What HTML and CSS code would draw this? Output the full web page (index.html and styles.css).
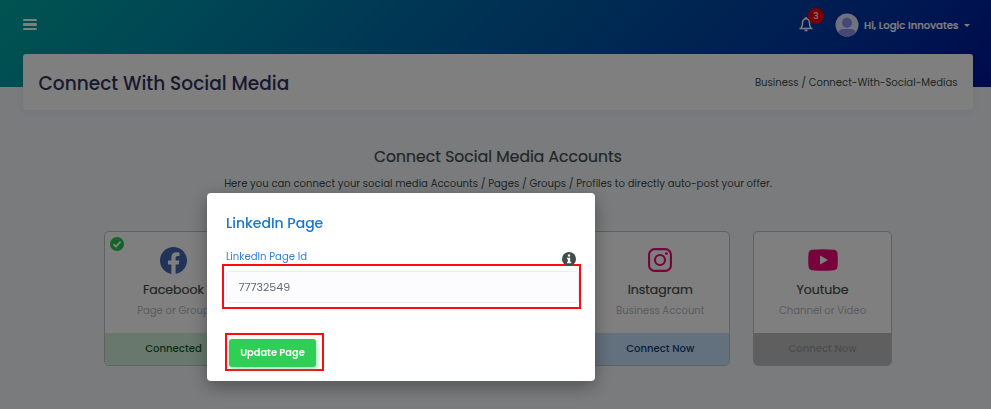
FILE: index.html
```html
<!DOCTYPE html>
<html lang="en">
<head>
<meta charset="utf-8">
<title>Connect With Social Media</title>
<link rel="stylesheet" href="styles.css">
</head>
<body>
<div class="page">
  <header class="hero">
    <nav class="topbar">
      <div class="burger"><i></i><i></i><i></i></div>
      <div class="user-area">
        <div class="bell">
          <svg width="14" height="16" viewBox="0 0 14 16" fill="none" stroke="currentColor" stroke-width="1.5"><path d="M.5 12.400h13M2 12.200c1.200-1.200 1.500-2.300 1.500-5.200C3.500 4.300 5 2.800 7 2.800s3.500 1.500 3.500 4.200c0 2.900.3 4 1.500 5.200"/><path d="M7 1v2M5.600 14.300h2.800" stroke-width="1.700"/></svg>
          <span class="badge">3</span>
        </div>
        <svg class="avatar" viewBox="0 0 24 24"><defs><clipPath id="round"><circle cx="12" cy="12" r="11.500"/></clipPath></defs><circle cx="12" cy="12" r="11.500" fill="#e0e4ff"/><g clip-path="url(#round)" fill="#8f8fee"><circle cx="12" cy="9.700" r="5"/><path d="M3.500 24v-4q0-4 5-4h7q5 0 5 4v4z"/></g></svg>
        <span class="hello">Hi, Logic Innovates</span>
        <span class="caret"></span>
      </div>
    </nav>
  </header>
  <section class="titlebar">
    <h1>Connect With Social Media</h1>
    <div class="crumbs">Business / Connect-With-Social-Medias</div>
  </section>
  <main>
    <h2>Connect Social Media Accounts</h2>
    <p class="intro">Here you can connect your social media Accounts / Pages / Groups / Profiles to directly auto-post your offer.</p>
    <div class="cards">
      <article class="card facebook">
        <svg class="check" viewBox="0 0 14 14"><circle cx="7" cy="7" r="7" fill="#28c74f"/><path d="M3.500 7.300l2.400 2.300 4.700-4.900" fill="none" stroke="#fff" stroke-width="1.900"/></svg>
        <div class="logo"><svg width="27" height="27" viewBox="0 0 24 24" fill="#4267b2"><path d="M24 12.070C24 5.400 18.630 0 12 0S0 5.400 0 12.070C0 18.100 4.390 23.090 10.130 24v-8.440H7.080v-3.490h3.050V9.410c0-3.020 1.790-4.690 4.530-4.690 1.310 0 2.680.24 2.680.24v2.970h-1.510c-1.490 0-1.960.93-1.960 1.890v2.250h3.330l-.53 3.490h-2.800V24C19.610 23.090 24 18.100 24 12.070z"/></svg></div>
        <h3>Facebook</h3><p>Page or Group</p><footer>Connected</footer>
      </article>
      <article class="card instagram">
        <div class="logo"><svg width="24" height="24" viewBox="0 0 24 24" fill="none" stroke="#ec0678" stroke-width="2.100"><rect x="1.100" y="1.100" width="21.800" height="21.800" rx="5.500"/><circle cx="12" cy="12" r="5"/><circle cx="18.400" cy="5.600" r="1.400" fill="#ec0678" stroke="none"/></svg></div>
        <h3>Instagram</h3><p>Business Account</p><footer>Connect Now</footer>
      </article>
      <article class="card youtube">
        <div class="logo"><svg width="30" height="22" viewBox="0 0 30 22"><path d="M4 .8Q15-.5 26 .8q3 .4 3.400 3.200.8 7 0 14-.4 2.800-3.400 3.200-11 1.300-22 0-3-.4-3.400-3.200-.8-7 0-14Q1 1.200 4 .8z" fill="#ec0678"/><path d="M12 6.400v9l8-4.500z" fill="#fff"/></svg></div>
        <h3>Youtube</h3><p>Channel or Video</p><footer>Connect Now</footer>
      </article>
    </div>
  </main>
</div>
<div class="backdrop">
  <div class="modal">
    <h4>LinkedIn Page</h4>
    <div class="label-row">
      <label for="page-id">LinkedIn Page Id</label>
      <svg class="info" viewBox="0 0 14 14"><circle cx="7" cy="7" r="7" fill="#404d49"/><path d="M5.900 2.500h2.300v2H5.900zM5 5.700h3.200v4h1v1.500H5V9.700h.9V7.200H5z" fill="#fff"/></svg>
    </div>
    <div class="mark mark-input"><input id="page-id" type="text" value="77732549"></div>
    <div class="mark mark-button"><button type="button">Update Page</button></div>
  </div>
</div>
</body>
</html>
```

FILE: styles.css
```css
* { box-sizing: border-box; }
body { margin: 0; width: 991px; height: 409px; overflow: hidden; font-family: Poppins, Inter, sans-serif; color: #404d49; }
h1, h2, h3, h4, p { margin: 0; white-space: nowrap; }
svg { display: block; }
.page { height: 409px; background: #f4f6fb; }
.hero { height: 87px; background: linear-gradient(135deg, #00a8a0 0%, #008eaa 19%, #0070a8 38%, #004ea4 62%, #0030a4 85%, #001498 100%); }
.topbar { display: flex; justify-content: space-between; align-items: center; height: 50px; padding: 0 21px 0 23px; color: #fff; }
.burger { display: flex; flex-direction: column; gap: 2.500px; width: 14px; margin-top: -1px; }
.burger i { height: 2.200px; background: #fff; border-radius: 1px; }
.user-area { display: flex; align-items: center; }
.bell { position: relative; margin-right: 22px; top: -1px; }
.badge { position: absolute; left: 9px; top: -8px; width: 16px; height: 16px; border-radius: 50%; background: #f00000; font-size: 9px; font-weight: 500; line-height: 16px; text-align: center; }
.avatar { width: 24px; height: 24px; margin-right: 5px; }
.hello { position: relative; top: .5px; font-size: 10.100px; font-weight: 500; width: 94px; letter-spacing: .02px; white-space: nowrap; -webkit-text-stroke: .2px; }
.caret { border: 3px solid transparent; border-top-color: #fff; border-bottom: 0; margin-left: 6px; }
.titlebar { display: flex; align-items: center; justify-content: space-between; height: 56px; margin: -33px 18px 0 23px; padding: 2px 15.500px 0; background: #fff; border-radius: 3px; box-shadow: 0 2px 6px rgba(30, 40, 60, .06); }
h1 { font-size: 18.550px; font-weight: 500; color: #33335c; }
.crumbs { font-size: 10.080px; white-space: nowrap; margin-top: -1px; }
main { padding-top: 36px; text-align: center; }
h2 { font-size: 15.500px; font-weight: 400; line-height: 22px; margin-left: 5px; letter-spacing: .07px; -webkit-text-stroke: .2px; }
.intro { margin: 8px 0 0 5px; font-size: 10.100px; line-height: 16px; }
.cards { display: grid; grid-template-columns: repeat(5, 139px); gap: 23.250px; width: 788px; margin: 39px 0 0 104px; }
.card { position: relative; height: 134.500px; border: 1px solid #bfc2c6; border-radius: 5px; overflow: hidden; background: #fff; }
.facebook { grid-column: 1; }
.instagram { grid-column: 4; }
.youtube { grid-column: 5; }
.check { position: absolute; left: 5px; top: 5px; width: 14px; height: 14px; }
.logo { display: grid; place-items: center; height: 32px; margin-top: 12px; }
.card h3 { font-size: 12.500px; font-weight: 400; line-height: 20px; margin-top: 4px; -webkit-text-stroke: .2px; }
.card p { font-size: 10.100px; line-height: 16px; margin-top: 3px; color: #b4b9be; }
.card footer { height: 31.500px; margin-top: 14px; font-size: 10.100px; font-weight: 500; line-height: 31px; background: #d0f0da; color: #145a2a; }
.instagram footer { background: #c6e0fa; color: #0b4080; }
.youtube footer { background: #bebfc1; color: #989898; }
.backdrop { position: fixed; inset: 0; background: rgba(0, 0, 0, .5); }
.modal { width: 388px; height: 188px; margin: 193px 0 0 207px; padding: 20px 14px 0 15px; background: #fff; border-radius: 4px; box-shadow: 0 5px 18px rgba(0, 0, 0, .35); }
h4 { margin-left: 4px; font-size: 14px; font-weight: 500; line-height: 21px; color: #1976d2; }
.label-row { display: flex; justify-content: space-between; height: 30px; padding: 15px 5px 0 4px; }
label { font-size: 10.100px; line-height: 16px; color: #3182d6; white-space: nowrap; }
.info { width: 14px; height: 14px; margin-top: 3px; }
.mark { border: 2px solid #ff0a12; }
.mark-input { width: 359px; height: 45px; padding: 5px 0 0 2px; }
input { display: block; width: 353px; height: 32px; padding: 0 11.500px; border: 1px solid #ebecfa; border-radius: 3px; background: #fcfcff; font: 11px Poppins, Inter, sans-serif; color: #616970; }
.mark-button { width: 99px; height: 38px; margin: 24px 0 0 3px; padding: 3px 0 0 2px; }
button { width: 87px; height: 28px; padding: 0; border: 0; border-radius: 3px; background: #2fce54; box-shadow: 1px 2px 5px rgba(47, 206, 84, .5); color: #fff; font: 600 9.900px Poppins, Inter, sans-serif; }
```
